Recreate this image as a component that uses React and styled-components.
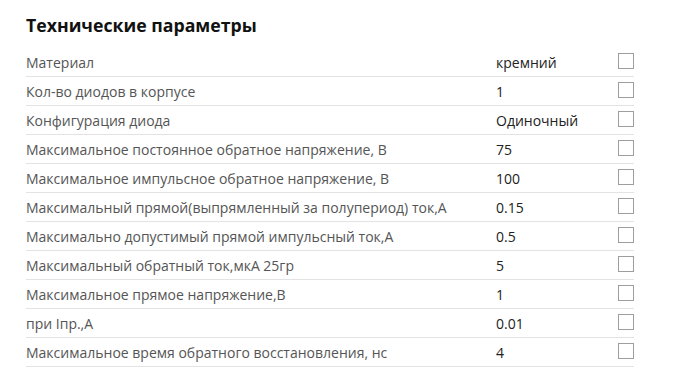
import React from 'react';
import styled, { createGlobalStyle } from 'styled-components';

const GlobalStyle = createGlobalStyle`
  body {
    margin: 0;
    background: #fff;
    font-family: 'Open Sans', 'DejaVu Sans', sans-serif;
  }
`;

const Wrapper = styled.section`
  padding: 13px 0 0 26px;
  width: 608px;
`;

const Title = styled.h2`
  margin: 0 0 11px;
  font-size: 17.7px;
  line-height: 24px;
  font-weight: 700;
  color: #111;
`;

const Row = styled.div`
  display: grid;
  grid-template-columns: 470px 1fr 16px;
  align-items: center;
  height: 28px;
  border-bottom: 1px solid #e3e3e3;
  font-size: 14px;
`;

const Label = styled.span`
  color: #555;
`;

const Value = styled.span`
  color: #222;
`;

const Check = styled.span`
  width: 16px;
  height: 16px;
  box-sizing: border-box;
  border: 1px solid #9e9e9e;
  background: #fff;
  align-self: start;
  margin-top: 5px;
`;

const params = [
  ['Материал', 'кремний'],
  ['Кол-во диодов в корпусе', '1'],
  ['Конфигурация диода', 'Одиночный'],
  ['Максимальное постоянное обратное напряжение, В', '75'],
  ['Максимальное импульсное обратное напряжение, В', '100'],
  ['Максимальный прямой(выпрямленный за полупериод) ток,А', '0.15'],
  ['Максимально допустимый прямой импульсный ток,А', '0.5'],
  ['Максимальный обратный ток,мкА 25гр', '5'],
  ['Максимальное прямое напряжение,В', '1'],
  ['при Iпр.,А', '0.01'],
  ['Максимальное время обратного восстановления, нс', '4'],
];

const App = () => (
  <>
    <GlobalStyle />
    <Wrapper>
      <Title>Технические параметры</Title>
      {params.map(([label, value]) => (
        <Row key={label}>
          <Label>{label}</Label>
          <Value>{value}</Value>
          <Check />
        </Row>
      ))}
    </Wrapper>
  </>
);

export default App;
